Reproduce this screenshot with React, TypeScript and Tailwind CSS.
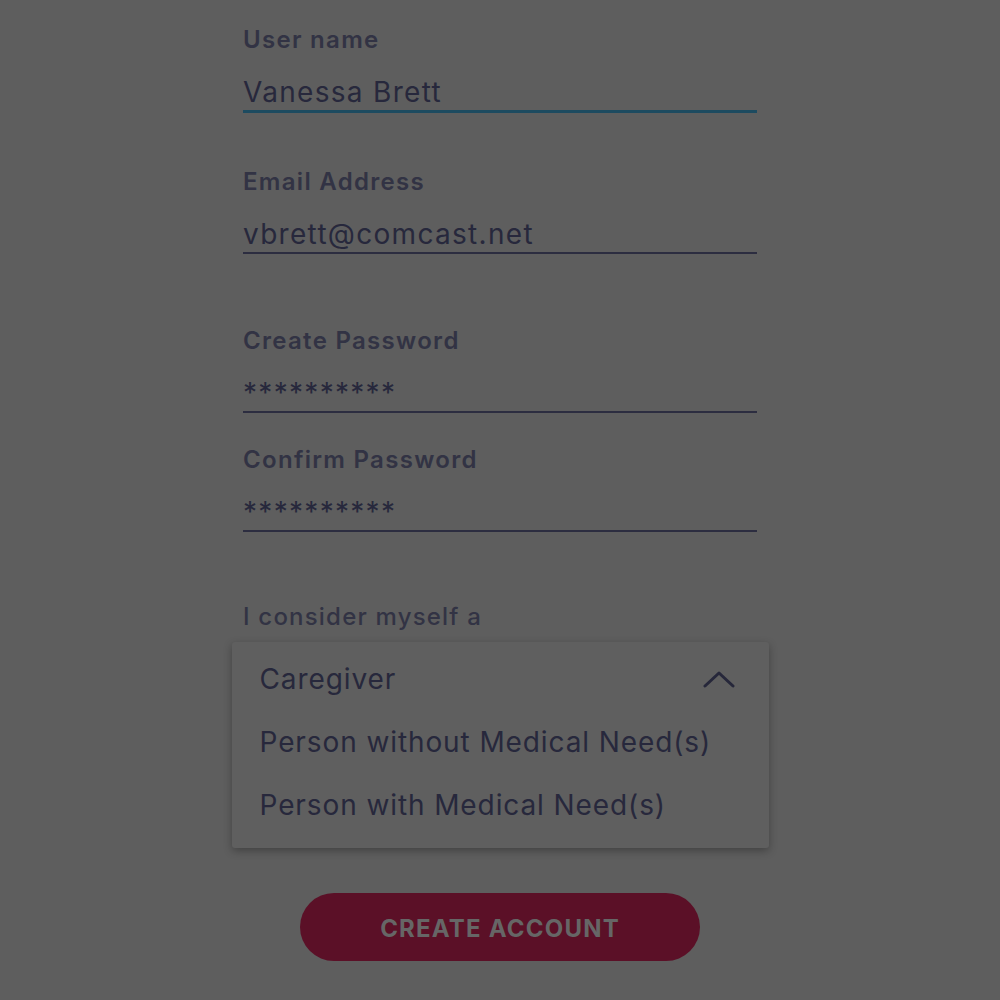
import React from "react";

const fields = [
  { label: "User name", value: "Vanessa Brett", active: true, gap: "mt-[24px]" },
  { label: "Email Address", value: "vbrett@comcast.net", active: false, gap: "mt-[53px]" },
  { label: "Create Password", value: "**********", active: false, gap: "mt-[71px]" },
  { label: "Confirm Password", value: "**********", active: false, gap: "mt-[31px]" },
];

const options = ["Caregiver", "Person without Medical Need(s)", "Person with Medical Need(s)"];

const ChevronUp = () => (
  <svg width="32" height="18" viewBox="0 0 32 18" fill="none">
    <path d="M2 16 L16 3 L30 16" stroke="#26273a" strokeWidth="3" strokeLinecap="round" strokeLinejoin="round" />
  </svg>
);

const App = () => {
  return (
    <div
      className="min-h-screen w-full bg-[#5e5e5e] flex flex-col items-center"
      style={{ fontFamily: "Inter, 'Noto Sans', sans-serif" }}
    >
      <div className="w-[514px] flex flex-col">
        {fields.map((f) => (
          <div key={f.label} className={f.gap + " flex flex-col"}>
            <label className="text-[24px] leading-[32px] font-semibold text-[#323344] tracking-[1.3px]">
              {f.label}
            </label>
            <div
              className={
                "mt-[18px] text-[28px] leading-[36px] text-[#27283c] tracking-[1.3px] " +
                (f.active ? "border-b-[3px] border-[#1d4b60]" : "border-b-2 border-[#2c2d40]")
              }
            >
              {f.value}
            </div>
          </div>
        ))}

        <div className="mt-[69px] text-[24px] leading-[32px] font-medium text-[#323344] tracking-[1.2px]">
          I consider myself a
        </div>
      </div>

      {/* open select menu */}
      <div className="mt-[9px] w-[537px] bg-[#5f5f5f] rounded-[3px] shadow-[0_3px_8px_rgba(0,0,0,0.3)] pt-[5px] pb-[12px]">
        {options.map((o, i) => (
          <div key={o} className="h-[63px] flex items-center justify-between pl-[28px] pr-[34px]">
            <span className="text-[28px] text-[#27283c] tracking-[0.9px]">{o}</span>
            {i === 0 && <ChevronUp />}
          </div>
        ))}
      </div>

      <button className="mt-[45px] w-[400px] h-[68px] pt-[4px] rounded-full bg-[#5b1027] text-[#666666] text-[24px] font-bold tracking-[1.2px]">
        CREATE ACCOUNT
      </button>
    </div>
  );
};

export default App;
